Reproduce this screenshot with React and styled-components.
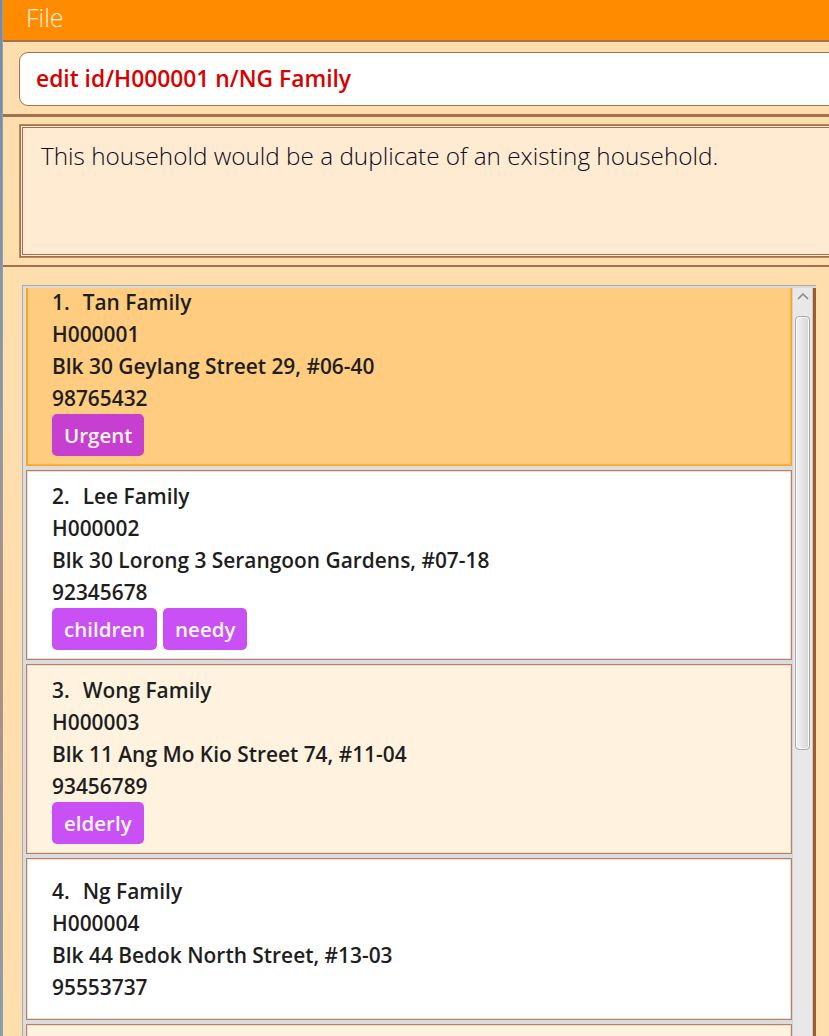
import React, { useLayoutEffect, useRef } from "react";
import styled, { createGlobalStyle, css } from "styled-components";

const GlobalStyle = createGlobalStyle`
  html, body {
    margin: 0;
    padding: 0;
    overflow: hidden;
    background: #ffdead;
  }
  * { box-sizing: border-box; }
`;

const FONT = `"Open Sans", "Noto Sans", "Liberation Sans", sans-serif`;
const BROWN = "#a5704f";

const Window = styled.div`
  display: flex;
  width: 880px;
  height: 1060px;
  font-family: ${FONT};
`;

const DesktopEdge = styled.div`
  width: 3px;
  flex: none;
  background: linear-gradient(#6d8db0, #8a98a8 40%, #b88a7a 60%, #7f9fb8);
  border-right: 1px solid #9d9d9d;
`;

const Main = styled.div`
  flex: 1;
  min-width: 0;
  display: flex;
  flex-direction: column;
  background: #ffdead;
`;

const MenuBar = styled.div`
  height: 42px;
  flex: none;
  display: flex;
  align-items: flex-start;
  padding: 0 0 0 23px;
  background: #ff8c00;
  border-bottom: 2px solid ${BROWN};
`;

const MenuItem = styled.span`
  font-size: 25px;
  font-weight: 300;
  color: #fff0dc;
  line-height: 35px;
`;

const CommandPane = styled.div`
  flex: none;
  padding: 10px 16px 8px 16px;
  border-bottom: 3px solid ${BROWN};
`;

const CommandField = styled.input`
  display: block;
  width: 100%;
  height: 54px;
  margin: 0;
  padding: 9px 16px 11px 16px;
  border: 1px solid ${BROWN};
  border-radius: 9px;
  background: #ffffff;
  font-family: ${FONT};
  font-size: 22.8px;
  font-weight: 600;
  line-height: 32px;
  color: #d90000;
  outline: none;
`;

const ResultPane = styled.div`
  flex: none;
  padding: 8px 16px 8px 17px;
  border-bottom: 2px solid ${BROWN};
`;

const ResultBox = styled.div`
  height: 132px;
  padding: 12px 18px;
  background: #ffebd2;
  border: 3px double ${BROWN};
  box-shadow: 0 0 0 1px #b98460;
  font-size: 24.3px;
  font-weight: 300;
  line-height: 32px;
  color: #0c0c1c;
`;

const ListPane = styled.div`
  flex: 1;
  min-height: 0;
  display: flex;
  flex-direction: column;
  padding: 18px 0 0 19px;
`;

const ListFrame = styled.div`
  flex: 1;
  min-height: 0;
  width: 794px;
  display: flex;
  padding: 2px 0 0 3px;
  background: #dcdcdc;
  border: 1px solid #a9a9a9;
  border-right: none;
`;

const Cells = styled.div`
  flex: 1;
  min-width: 0;
  overflow: hidden;
  display: flex;
  flex-direction: column;
  gap: 4px;
`;

const Scroller = styled.div`
  width: 24px;
  flex: none;
  display: flex;
  flex-direction: column;
  align-items: flex-start;
  background: #e8e8e8;
  border-left: 1px solid #d4d4d4;
  border-right: 3px solid #9c5c30;
  box-shadow: inset -1px 0 0 #c9c9c9;
`;

const ArrowBox = styled.div`
  height: 24px;
  width: 19px;
  display: flex;
  align-items: flex-start;
  justify-content: center;
  padding-top: 4px;
`;

const Thumb = styled.div`
  margin: 4px 0 0 2px;
  width: 15px;
  height: 434px;
  border: 1px solid #a9a9a9;
  border-radius: 4px;
  background: linear-gradient(to right, #f2f2f2, #e2e2e2 60%, #d6d6d6);
  box-shadow: inset 0 0 0 1px #fafafa;
`;

const cardTone = {
  selected: css`
    background: #ffcc80;
    border: 1px solid #ffa31a;
    box-shadow: inset 1px 0 0 #ffa31a, inset 0 0 0 1px #ffb441;
  `,
  plain: css`
    background: #ffffff;
    border: 1px solid #b3806a;
    box-shadow: inset 0 0 0 1px #f0ddd3;
  `,
  tinted: css`
    background: #fff3e0;
    border: 1px solid #b3806a;
    box-shadow: inset 0 0 0 1px #f3dccd;
  `,
};

const Card = styled.div`
  flex: none;
  min-height: 162px;
  display: flex;
  flex-direction: column;
  justify-content: center;
  padding: 9px 25px;
  ${(p) => cardTone[p.$tone]}
`;

const Line = styled.div`
  font-size: 20.9px;
  font-weight: 600;
  line-height: 32px;
  color: #1e1e1e;
  white-space: nowrap;
`;

const NameLine = styled(Line)`
  display: flex;
  gap: 13px;
`;

const Tags = styled.div`
  display: flex;
  gap: 6px;
`;

const Tag = styled.span`
  height: 42px;
  padding: 0 12px;
  border-radius: 5px;
  background: ${(p) => (p.$urgent ? "#c63fd0" : "#c850f5")};
  color: #fff6f0;
  font-size: 20.5px;
  font-weight: 600;
  line-height: 42px;
`;

const households = [
  {
    id: "H000001",
    name: "Tan Family",
    address: "Blk 30 Geylang Street 29, #06-40",
    phone: "98765432",
    tags: ["Urgent"],
  },
  {
    id: "H000002",
    name: "Lee Family",
    address: "Blk 30 Lorong 3 Serangoon Gardens, #07-18",
    phone: "92345678",
    tags: ["children", "needy"],
  },
  {
    id: "H000003",
    name: "Wong Family",
    address: "Blk 11 Ang Mo Kio Street 74, #11-04",
    phone: "93456789",
    tags: ["elderly"],
  },
  {
    id: "H000004",
    name: "Ng Family",
    address: "Blk 44 Bedok North Street, #13-03",
    phone: "95553737",
    tags: [],
  },
];

function toneFor(index, selected) {
  if (selected) return "selected";
  return index % 2 === 0 ? "plain" : "tinted";
}

function HouseholdCard({ index, data, selected }) {
  return (
    <Card $tone={toneFor(index, selected)}>
      <NameLine>
        <span>{index}.</span>
        <span>{data.name}</span>
      </NameLine>
      <Line>{data.id}</Line>
      <Line>{data.address}</Line>
      <Line>{data.phone}</Line>
      {data.tags.length > 0 && (
        <Tags>
          {data.tags.map((t) => (
            <Tag key={t} $urgent={t === "Urgent"}>
              {t}
            </Tag>
          ))}
        </Tags>
      )}
    </Card>
  );
}

export default function App() {
  const listRef = useRef(null);
  useLayoutEffect(() => {
    if (listRef.current) listRef.current.scrollTop = 12;
  }, []);

  return (
    <>
      <GlobalStyle />
      <Window>
        <DesktopEdge />
        <Main>
          <MenuBar>
            <MenuItem>File</MenuItem>
          </MenuBar>
          <CommandPane>
            <CommandField readOnly value="edit id/H000001 n/NG Family" />
          </CommandPane>
          <ResultPane>
            <ResultBox>
              This household would be a duplicate of an existing household.
            </ResultBox>
          </ResultPane>
          <ListPane>
            <ListFrame>
              <Cells ref={listRef}>
                {households.map((h, i) => (
                  <HouseholdCard
                    key={h.id}
                    index={i + 1}
                    data={h}
                    selected={i === 0}
                  />
                ))}
                <Card $tone={toneFor(households.length + 1, false)} />
              </Cells>
              <Scroller>
                <ArrowBox>
                  <svg width="12" height="8" viewBox="0 0 12 8">
                    <polyline
                      points="1,7 6,2 11,7"
                      fill="none"
                      stroke="#858585"
                      strokeWidth="1.5"
                    />
                  </svg>
                </ArrowBox>
                <Thumb />
              </Scroller>
            </ListFrame>
          </ListPane>
        </Main>
      </Window>
    </>
  );
}
